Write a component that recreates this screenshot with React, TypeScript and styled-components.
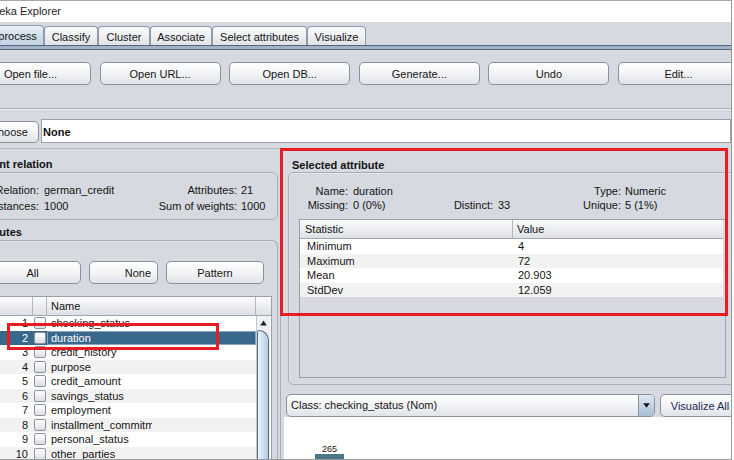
import React from 'react';
import styled, { createGlobalStyle, css } from 'styled-components';

const FONT = `"Liberation Sans", Arial, Helvetica, sans-serif`;

const GlobalStyle = createGlobalStyle`
  html, body { margin: 0; padding: 0; background: #ffffff; }
  body { font-family: ${FONT}; font-size: 11px; color: #141414; }
  * { box-sizing: border-box; }
`;

const Stage = styled.div`
  position: relative;
  width: 734px;
  height: 460px;
  overflow: hidden;
`;

const Window = styled.div`
  width: 732px;
  height: 460px;
  border-top: 1px solid #a6a6a6;
  border-right: 1px solid #9a9a9a;
  border-bottom: 1px solid #9a9a9a;
  background: #d6d9df;
  overflow: hidden;
`;

const Canvas = styled.div`
  margin-left: -38px;
  width: 769px;
  height: 100%;
  display: flex;
  flex-direction: column;
`;

const TitleBar = styled.div`
  height: 21px;
  flex-shrink: 0;
  background: #ffffff;
  padding-left: 27px;
  line-height: 20px;
  font-size: 11px;
  color: #1e1e1e;
`;

const TabStrip = styled.div`
  margin-top: 3px;
  height: 20px;
  flex-shrink: 0;
  display: flex;
  align-items: flex-end;
  padding-left: 12px;
`;

const Tab = styled.div<{ $w: number; $selected?: boolean }>`
  width: ${(p) => p.$w}px;
  height: ${(p) => (p.$selected ? 20 : 19)}px;
  flex-shrink: 0;
  border: 1px solid #8f99a8;
  border-bottom: none;
  border-radius: 4px 4px 0 0;
  display: flex;
  align-items: center;
  justify-content: center;
  padding-top: 1px;
  color: #161616;
  background: ${(p) =>
    p.$selected
      ? 'linear-gradient(to bottom, #e9eff6 0%, #d3dfeb 50%, #c3d3e3 100%)'
      : 'linear-gradient(to bottom, #fbfbfc 0%, #eef0f3 50%, #dfe2e7 100%)'};
`;

const TabBand = styled.div`
  height: 5px;
  flex-shrink: 0;
  border-top: 1px solid #56657b;
  border-bottom: 1px solid #56657b;
  background: #a2b2c6;
`;

const ButtonBox = styled.div`
  flex-shrink: 0;
  display: flex;
  gap: 8.6px;
  padding: 12px 0 23px 8px;
  border-bottom: 1px solid #a8adb5;
  box-shadow: 0 1px 0 #eef0f3;
`;

const ToolButton = styled.div<{ $w: number; $h?: number; $align?: 'center' | 'right'; $ink?: string }>`
  width: ${(p) => p.$w}px;
  height: ${(p) => p.$h ?? 23}px;
  flex-shrink: 0;
  border: 1px solid #8b919b;
  border-radius: 5px;
  background: linear-gradient(to bottom, #ffffff 0%, #f4f5f7 45%, #e0e3e8 100%);
  box-shadow: inset 0 1px 0 #ffffff;
  display: flex;
  align-items: center;
  justify-content: ${(p) => (p.$align === 'right' ? 'flex-end' : 'center')};
  padding-right: ${(p) => (p.$align === 'right' ? 6 : 0)}px;
  color: ${(p) => p.$ink ?? '#151515'};
  white-space: nowrap;
`;

const FilterRow = styled.div`
  margin-top: 10px;
  height: 24px;
  flex-shrink: 0;
  display: flex;
  align-items: flex-end;
  gap: 2px;
  padding-left: 17px;
`;

const FilterField = styled.div`
  flex: 1;
  height: 24px;
  background: #ffffff;
  border: 1px solid #9ba2ac;
  font-weight: bold;
  padding-left: 1px;
  padding-top: 2px;
  line-height: 20px;
  color: #111;
`;

const Main = styled.div`
  margin-top: 5px;
  flex: 1;
  min-height: 0;
  display: flex;
`;

const LeftCol = styled.div`
  width: 318px;
  flex-shrink: 0;
  border-top: 1px solid #b8bcc3;
  display: flex;
  flex-direction: column;
`;

const SectionTitle = styled.div<{ $x: number; $mt: number }>`
  font-weight: bold;
  line-height: 14px;
  height: 14px;
  padding-left: ${(p) => p.$x}px;
  margin-top: ${(p) => p.$mt}px;
  color: #111;
  flex-shrink: 0;
`;

const InfoBox = styled.div`
  margin: 1px 2px 0 4px;
  height: 48px;
  flex-shrink: 0;
  border: 1px solid #a7acb5;
  border-radius: 6px;
  box-shadow: inset 1px 1px 0 #e4e6ea;
  padding: 9px 10px 5px 1px;
`;

const InfoGrid = styled.div`
  display: grid;
  grid-template-columns: 71px 1fr auto 30px;
  grid-auto-rows: 16px;
  align-items: center;
  white-space: nowrap;
`;

const Label = styled.div`
  text-align: right;
`;

const Value = styled.div<{ $pad: number }>`
  padding-left: ${(p) => p.$pad}px;
`;

const AttrBox = styled.div`
  margin: 1px 2px 0 4px;
  flex: 1;
  min-height: 0;
  border: 1px solid #a7acb5;
  border-bottom: none;
  border-radius: 6px 6px 0 0;
  box-shadow: inset 1px 1px 0 #e4e6ea;
  padding: 20px 5px 0 3px;
  display: flex;
  flex-direction: column;
`;

const AttrButtons = styled.div`
  display: flex;
  gap: 8px;
  padding-left: 14px;
  flex-shrink: 0;
`;

const AttrTable = styled.div`
  margin-top: 12px;
  flex: 1;
  border: 1px solid #9aa0a8;
  border-bottom: none;
  display: flex;
  flex-direction: column;
  background: #ffffff;
`;

const HeaderRow = styled.div`
  display: grid;
  grid-template-columns: 62px 14px 209px 14px;
  height: 19px;
  flex-shrink: 0;
  background: linear-gradient(to bottom, #fbfbfc 0%, #eceef1 50%, #dde0e5 100%);
  border-bottom: 1px solid #a0a6ae;
`;

const HeaderCell = styled.div<{ $last?: boolean }>`
  border-right: ${(p) => (p.$last ? 'none' : '1px solid #b2b7bf')};
  padding-left: 4px;
  line-height: 18px;
  color: #141414;
`;

const TableBody = styled.div`
  display: flex;
  flex: 1;
`;

const RowList = styled.div`
  width: 285px;
  flex-shrink: 0;
`;

const AttrRow = styled.div<{ $selected?: boolean; $stripe?: boolean }>`
  display: grid;
  grid-template-columns: 62px 14px 209px;
  height: 14.5px;
  line-height: 14.5px;
  background: ${(p) => (p.$selected ? '#39698a' : p.$stripe ? '#f2f2f2' : '#ffffff')};
  color: ${(p) => (p.$selected ? '#ffffff' : '#141414')};
`;

const NumCell = styled.div`
  text-align: right;
  padding-right: 5px;
`;

const CheckCell = styled.div`
  display: flex;
  align-items: center;
  justify-content: center;
`;

const CheckBox = styled.div`
  width: 12px;
  height: 12px;
  border: 1px solid #8e949d;
  border-radius: 2px;
  background: linear-gradient(to bottom, #ffffff 0%, #eef0f2 50%, #d9dce1 100%);
`;

const NameCell = styled.div<{ $selected?: boolean }>`
  padding-left: 4px;
  overflow: hidden;
  white-space: nowrap;
  ${(p) =>
    p.$selected &&
    css`
      box-shadow: inset 0 0 0 1px #8aa7c0;
    `}
`;

const NameText = styled.span`
  display: block;
  max-width: 101px;
  overflow: hidden;
`;

const ScrollBar = styled.div`
  width: 14px;
  flex-shrink: 0;
  display: flex;
  flex-direction: column;
  background: #eef1f4;
  border-left: 1px solid #c3c8cf;
`;

const ArrowBtn = styled.div`
  height: 14px;
  flex-shrink: 0;
  display: flex;
  align-items: center;
  justify-content: center;
`;

const Thumb = styled.div`
  flex: 1;
  margin-right: 1px;
  border: 1px solid #566a80;
  border-bottom: none;
  border-radius: 2px 10px 0 0;
  background: linear-gradient(to right, #eaf3fb 0%, #cfe2f2 45%, #b3cde6 100%);
`;

const RightCol = styled.div`
  flex: 1;
  min-width: 0;
  border-left: 1px solid #a9aeb6;
  display: flex;
  flex-direction: column;
`;

const SelectedBox = styled.div`
  margin: 0 -12px 0 7px;
  height: 213px;
  flex-shrink: 0;
  border: 1px solid #a7acb5;
  border-radius: 6px;
  box-shadow: inset 1px 1px 0 #e4e6ea;
  padding-top: 11px;
`;

const SelInfoGrid = styled.div`
  display: grid;
  grid-template-columns: 59px 86px 59px 46px 82px 1fr;
  grid-auto-rows: 14px;
  align-items: center;
  white-space: nowrap;
`;

const StatPane = styled.div`
  margin: 7px 0 0 10px;
  width: 427px;
  height: 159px;
  border: 1px solid #9aa0a8;
  background: #d6d9df;
`;

const StatHeader = styled.div`
  width: 423px;
  height: 19px;
  display: grid;
  grid-template-columns: 213px 1fr;
  background: linear-gradient(to bottom, #fbfbfc 0%, #eceef1 50%, #dde0e5 100%);
  border-bottom: 1px solid #a0a6ae;
`;

const StatHeadCell = styled.div<{ $pad: number; $divider?: boolean }>`
  padding-left: ${(p) => p.$pad}px;
  line-height: 18px;
  border-right: ${(p) => (p.$divider ? '1px solid #b2b7bf' : 'none')};
`;

const StatRow = styled.div<{ $stripe?: boolean }>`
  width: 423px;
  height: 14.5px;
  line-height: 15px;
  display: grid;
  grid-template-columns: 213px 1fr;
  background: ${(p) => (p.$stripe ? '#f2f2f2' : '#ffffff')};
`;

const StatCell = styled.div<{ $pad: number }>`
  padding-left: ${(p) => p.$pad}px;
`;

const ClassRow = styled.div`
  margin-top: 9px;
  height: 23px;
  flex-shrink: 0;
  display: flex;
  gap: 5px;
  padding-left: 5px;
`;

const Combo = styled.div`
  width: 369px;
  height: 23px;
  flex-shrink: 0;
  border: 1px solid #8b919b;
  border-radius: 5px;
  background: linear-gradient(to bottom, #ffffff 0%, #f3f4f6 45%, #e0e3e8 100%);
  display: flex;
  overflow: hidden;
`;

const ComboText = styled.div`
  flex: 1;
  padding-left: 4px;
  line-height: 21px;
  color: #151515;
`;

const ComboArrow = styled.div`
  width: 16px;
  border-left: 1px solid #8b919b;
  background: linear-gradient(to bottom, #dfe8f1 0%, #c3d3e3 50%, #a9bfd5 100%);
  display: flex;
  align-items: center;
  justify-content: center;
`;

const Chart = styled.div`
  flex: 1;
  margin-left: 3px;
  background: #ffffff;
  padding: 28px 0 0 31px;
`;

const BarGroup = styled.div`
  width: 29px;
  display: flex;
  flex-direction: column;
  align-items: center;
`;

const BarLabel = styled.div`
  font-size: 9px;
  line-height: 9px;
  color: #111;
`;

const Bar = styled.div`
  width: 29px;
  height: 20px;
  background: #4b7686;
`;

const RedMark = styled.div<{ $x: number; $y: number; $w: number; $h: number }>`
  position: absolute;
  left: ${(p) => p.$x}px;
  top: ${(p) => p.$y}px;
  width: ${(p) => p.$w}px;
  height: ${(p) => p.$h}px;
  border: 3px solid #e81c24;
  pointer-events: none;
`;

const tabs = [
  { label: 'Preprocess', w: 70, selected: true },
  { label: 'Classify', w: 54 },
  { label: 'Cluster', w: 52 },
  { label: 'Associate', w: 62 },
  { label: 'Select attributes', w: 95 },
  { label: 'Visualize', w: 59 },
];

const tools = ['Open file...', 'Open URL...', 'Open DB...', 'Generate...', 'Undo', 'Edit...'];

const attributes = [
  'checking_status',
  'duration',
  'credit_history',
  'purpose',
  'credit_amount',
  'savings_status',
  'employment',
  'installment_commitment',
  'personal_status',
  'other_parties',
  'residence_since',
];

const stats = [
  ['Minimum', '4'],
  ['Maximum', '72'],
  ['Mean', '20.903'],
  ['StdDev', '12.059'],
];

export default function App() {
  return (
    <>
      <GlobalStyle />
      <Stage>
        <Window>
          <Canvas>
            <TitleBar>Weka Explorer</TitleBar>
            <TabStrip>
              {tabs.map((t) => (
                <Tab key={t.label} $w={t.w} $selected={t.selected}>
                  {t.label}
                </Tab>
              ))}
            </TabStrip>
            <TabBand />
            <ButtonBox>
              {tools.map((t) => (
                <ToolButton key={t} $w={121}>
                  {t}
                </ToolButton>
              ))}
            </ButtonBox>
            <FilterRow>
              <ToolButton $w={60} $h={22}>
                Choose
              </ToolButton>
              <FilterField>None</FilterField>
            </FilterRow>
            <Main>
              <LeftCol>
                <SectionTitle $x={8} $mt={8}>
                  Current relation
                </SectionTitle>
                <InfoBox>
                  <InfoGrid>
                    <Label>Relation:</Label>
                    <Value $pad={5}>german_credit</Value>
                    <Label>Attributes:</Label>
                    <Value $pad={4}>21</Value>
                    <Label>Instances:</Label>
                    <Value $pad={5}>1000</Value>
                    <Label>Sum of weights:</Label>
                    <Value $pad={4}>1000</Value>
                  </InfoGrid>
                </InfoBox>
                <SectionTitle $x={8} $mt={5}>
                  Attributes
                </SectionTitle>
                <AttrBox>
                  <AttrButtons>
                    <ToolButton $w={97}>All</ToolButton>
                    <ToolButton $w={69} $align="right">
                      None
                    </ToolButton>
                    <ToolButton $w={98}>Pattern</ToolButton>
                  </AttrButtons>
                  <AttrTable>
                    <HeaderRow>
                      <HeaderCell />
                      <HeaderCell />
                      <HeaderCell>Name</HeaderCell>
                      <HeaderCell $last />
                    </HeaderRow>
                    <TableBody>
                      <RowList>
                        {attributes.map((name, i) => (
                          <AttrRow key={name} $selected={i === 1} $stripe={i % 2 === 1}>
                            <NumCell>{i + 1}</NumCell>
                            <CheckCell>
                              <CheckBox />
                            </CheckCell>
                            <NameCell $selected={i === 1}>
                              <NameText>{name}</NameText>
                            </NameCell>
                          </AttrRow>
                        ))}
                      </RowList>
                      <ScrollBar>
                        <ArrowBtn>
                          <svg width="7" height="6" viewBox="0 0 7 6">
                            <path d="M3.5 0.5 L6.8 5.5 L0.2 5.5 Z" fill="#222" />
                          </svg>
                        </ArrowBtn>
                        <Thumb />
                      </ScrollBar>
                    </TableBody>
                  </AttrTable>
                </AttrBox>
              </LeftCol>
              <RightCol>
                <SectionTitle $x={11} $mt={10}>
                  Selected attribute
                </SectionTitle>
                <SelectedBox>
                  <SelInfoGrid>
                    <Label>Name:</Label>
                    <Value $pad={5}>duration</Value>
                    <Label />
                    <Value $pad={5} />
                    <Label>Type:</Label>
                    <Value $pad={4}>Numeric</Value>
                    <Label>Missing:</Label>
                    <Value $pad={5}>0 (0%)</Value>
                    <Label>Distinct:</Label>
                    <Value $pad={5}>33</Value>
                    <Label>Unique:</Label>
                    <Value $pad={4}>5 (1%)</Value>
                  </SelInfoGrid>
                  <StatPane>
                    <StatHeader>
                      <StatHeadCell $pad={5} $divider>
                        Statistic
                      </StatHeadCell>
                      <StatHeadCell $pad={4}>Value</StatHeadCell>
                    </StatHeader>
                    {stats.map(([k, v], i) => (
                      <StatRow key={k} $stripe={i % 2 === 1}>
                        <StatCell $pad={7}>{k}</StatCell>
                        <StatCell $pad={5}>{v}</StatCell>
                      </StatRow>
                    ))}
                  </StatPane>
                </SelectedBox>
                <ClassRow>
                  <Combo>
                    <ComboText>Class: checking_status (Nom)</ComboText>
                    <ComboArrow>
                      <svg width="7" height="5" viewBox="0 0 7 5">
                        <path d="M0.2 0.3 L6.8 0.3 L3.5 4.8 Z" fill="#111" />
                      </svg>
                    </ComboArrow>
                  </Combo>
                  <ToolButton $w={80} $ink="#1d2a55">
                    Visualize All
                  </ToolButton>
                </ClassRow>
                <Chart>
                  <BarGroup>
                    <BarLabel>265</BarLabel>
                    <Bar />
                  </BarGroup>
                </Chart>
              </RightCol>
            </Main>
          </Canvas>
        </Window>
        <RedMark $x={7} $y={323} $w={212} $h={27} />
        <RedMark $x={280} $y={148} $w={448} $h={168} />
      </Stage>
    </>
  );
}
